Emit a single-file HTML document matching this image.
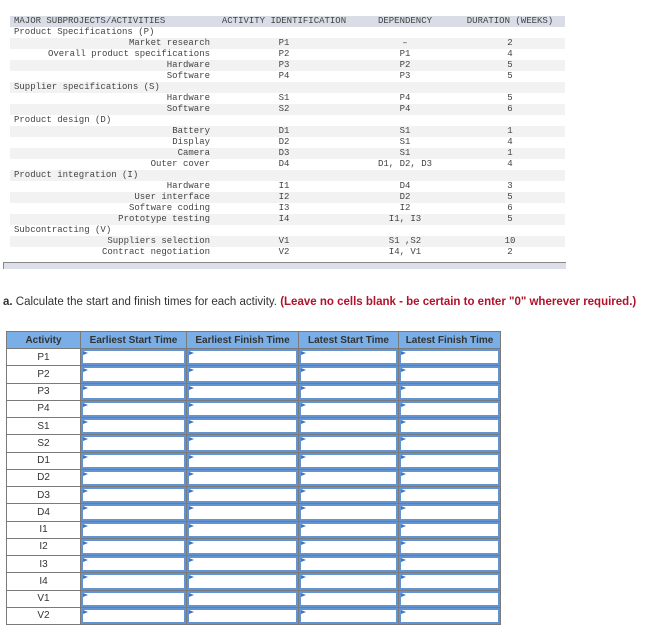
<!DOCTYPE html>
<html><head><meta charset="utf-8"><style>
body{margin:0;width:648px;height:629px;background:#fff;position:relative;overflow:hidden;font-family:"Liberation Sans",sans-serif}
.t{position:absolute;font-family:"Liberation Mono",monospace;font-size:9px;color:#444;line-height:11px;white-space:pre}
.row{position:absolute;left:10px;width:555px;height:11px}
.r{text-align:right;width:200px;left:10px}
.c{text-align:center}
table{position:absolute;left:6px;top:331px;border-collapse:collapse}
td,th{border:1px solid #7a7a7a;padding:0;font-size:10px;color:#333;text-align:center}
th{background:#79aee6;height:16px;font-weight:bold;color:#333}
td{height:16.25px}
td.i{position:relative}
td.i div{position:absolute;left:0;top:0;right:0;bottom:0;border:2px solid #6293d3}
td.i div:before{content:"";position:absolute;left:0;top:0;border-left:5px solid #3b78c9;border-top:2.5px solid transparent;border-bottom:2.5px solid transparent}
</style></head><body>
<div class="row" style="top:16px;background:#dadde6"></div>
<div class="row" style="top:38px;background:#f2f2f2"></div>
<div class="row" style="top:60px;background:#f2f2f2"></div>
<div class="row" style="top:82px;background:#f2f2f2"></div>
<div class="row" style="top:104px;background:#f2f2f2"></div>
<div class="row" style="top:126px;background:#f2f2f2"></div>
<div class="row" style="top:148px;background:#f2f2f2"></div>
<div class="row" style="top:170px;background:#f2f2f2"></div>
<div class="row" style="top:192px;background:#f2f2f2"></div>
<div class="row" style="top:214px;background:#f2f2f2"></div>
<div class="row" style="top:236px;background:#f2f2f2"></div>
<div style="position:absolute;left:3px;top:262px;width:562px;height:6px;background:#dcdfe8;border-top:1px solid #888;border-left:1px solid #888"></div>

<div class="t" style="left:14px;top:16px">MAJOR SUBPROJECTS/ACTIVITIES</div>
<div class="t c" style="left:220px;width:128px;top:16px">ACTIVITY IDENTIFICATION</div>
<div class="t c" style="left:365px;width:80px;top:16px">DEPENDENCY</div>
<div class="t c" style="left:460px;width:100px;top:16px">DURATION (WEEKS)</div>

<div class="t" style="left:14px;top:27px">Product Specifications (P)</div>
<div class="t" style="left:14px;top:82px">Supplier specifications (S)</div>
<div class="t" style="left:14px;top:115px">Product design (D)</div>
<div class="t" style="left:14px;top:170px">Product integration (I)</div>
<div class="t" style="left:14px;top:225px">Subcontracting (V)</div>

<div class="t r" style="top:38px">Market research
Overall product specifications
Hardware
Software

Hardware
Software

Battery
Display
Camera
Outer cover

Hardware
User interface
Software coding
Prototype testing

Suppliers selection
Contract negotiation</div>
<div class="t c" style="left:264px;width:40px;top:38px">P1
P2
P3
P4

S1
S2

D1
D2
D3
D4

I1
I2
I3
I4

V1
V2</div>
<div class="t c" style="left:365px;width:80px;top:38px">–
P1
P2
P3

P4
P4

S1
S1
S1
D1, D2, D3

D4
D2
I2
I1, I3

S1 ,S2
I4, V1</div>
<div class="t c" style="left:490px;width:40px;top:38px">2
4
5
5

5
6

1
4
1
4

3
5
6
5

10
2</div>

<div style="position:absolute;left:3px;top:296px;font-size:11.5px;color:#333;white-space:nowrap"><b>a.</b> Calculate the start and finish times for each activity. <b style="color:#b0122a">(Leave no cells blank - be certain to enter "0" wherever required.)</b></div>

<table>
<tr><th style="width:73px">Activity</th><th style="width:105px">Earliest Start Time</th><th style="width:111px">Earliest Finish Time</th><th style="width:99px">Latest Start Time</th><th style="width:101px">Latest Finish Time</th></tr>
<tr><td>P1</td><td class="i"><div></div></td><td class="i"><div></div></td><td class="i"><div></div></td><td class="i"><div></div></td></tr>
<tr><td>P2</td><td class="i"><div></div></td><td class="i"><div></div></td><td class="i"><div></div></td><td class="i"><div></div></td></tr>
<tr><td>P3</td><td class="i"><div></div></td><td class="i"><div></div></td><td class="i"><div></div></td><td class="i"><div></div></td></tr>
<tr><td>P4</td><td class="i"><div></div></td><td class="i"><div></div></td><td class="i"><div></div></td><td class="i"><div></div></td></tr>
<tr><td>S1</td><td class="i"><div></div></td><td class="i"><div></div></td><td class="i"><div></div></td><td class="i"><div></div></td></tr>
<tr><td>S2</td><td class="i"><div></div></td><td class="i"><div></div></td><td class="i"><div></div></td><td class="i"><div></div></td></tr>
<tr><td>D1</td><td class="i"><div></div></td><td class="i"><div></div></td><td class="i"><div></div></td><td class="i"><div></div></td></tr>
<tr><td>D2</td><td class="i"><div></div></td><td class="i"><div></div></td><td class="i"><div></div></td><td class="i"><div></div></td></tr>
<tr><td>D3</td><td class="i"><div></div></td><td class="i"><div></div></td><td class="i"><div></div></td><td class="i"><div></div></td></tr>
<tr><td>D4</td><td class="i"><div></div></td><td class="i"><div></div></td><td class="i"><div></div></td><td class="i"><div></div></td></tr>
<tr><td>I1</td><td class="i"><div></div></td><td class="i"><div></div></td><td class="i"><div></div></td><td class="i"><div></div></td></tr>
<tr><td>I2</td><td class="i"><div></div></td><td class="i"><div></div></td><td class="i"><div></div></td><td class="i"><div></div></td></tr>
<tr><td>I3</td><td class="i"><div></div></td><td class="i"><div></div></td><td class="i"><div></div></td><td class="i"><div></div></td></tr>
<tr><td>I4</td><td class="i"><div></div></td><td class="i"><div></div></td><td class="i"><div></div></td><td class="i"><div></div></td></tr>
<tr><td>V1</td><td class="i"><div></div></td><td class="i"><div></div></td><td class="i"><div></div></td><td class="i"><div></div></td></tr>
<tr><td>V2</td><td class="i"><div></div></td><td class="i"><div></div></td><td class="i"><div></div></td><td class="i"><div></div></td></tr>
</table>
</body></html>
